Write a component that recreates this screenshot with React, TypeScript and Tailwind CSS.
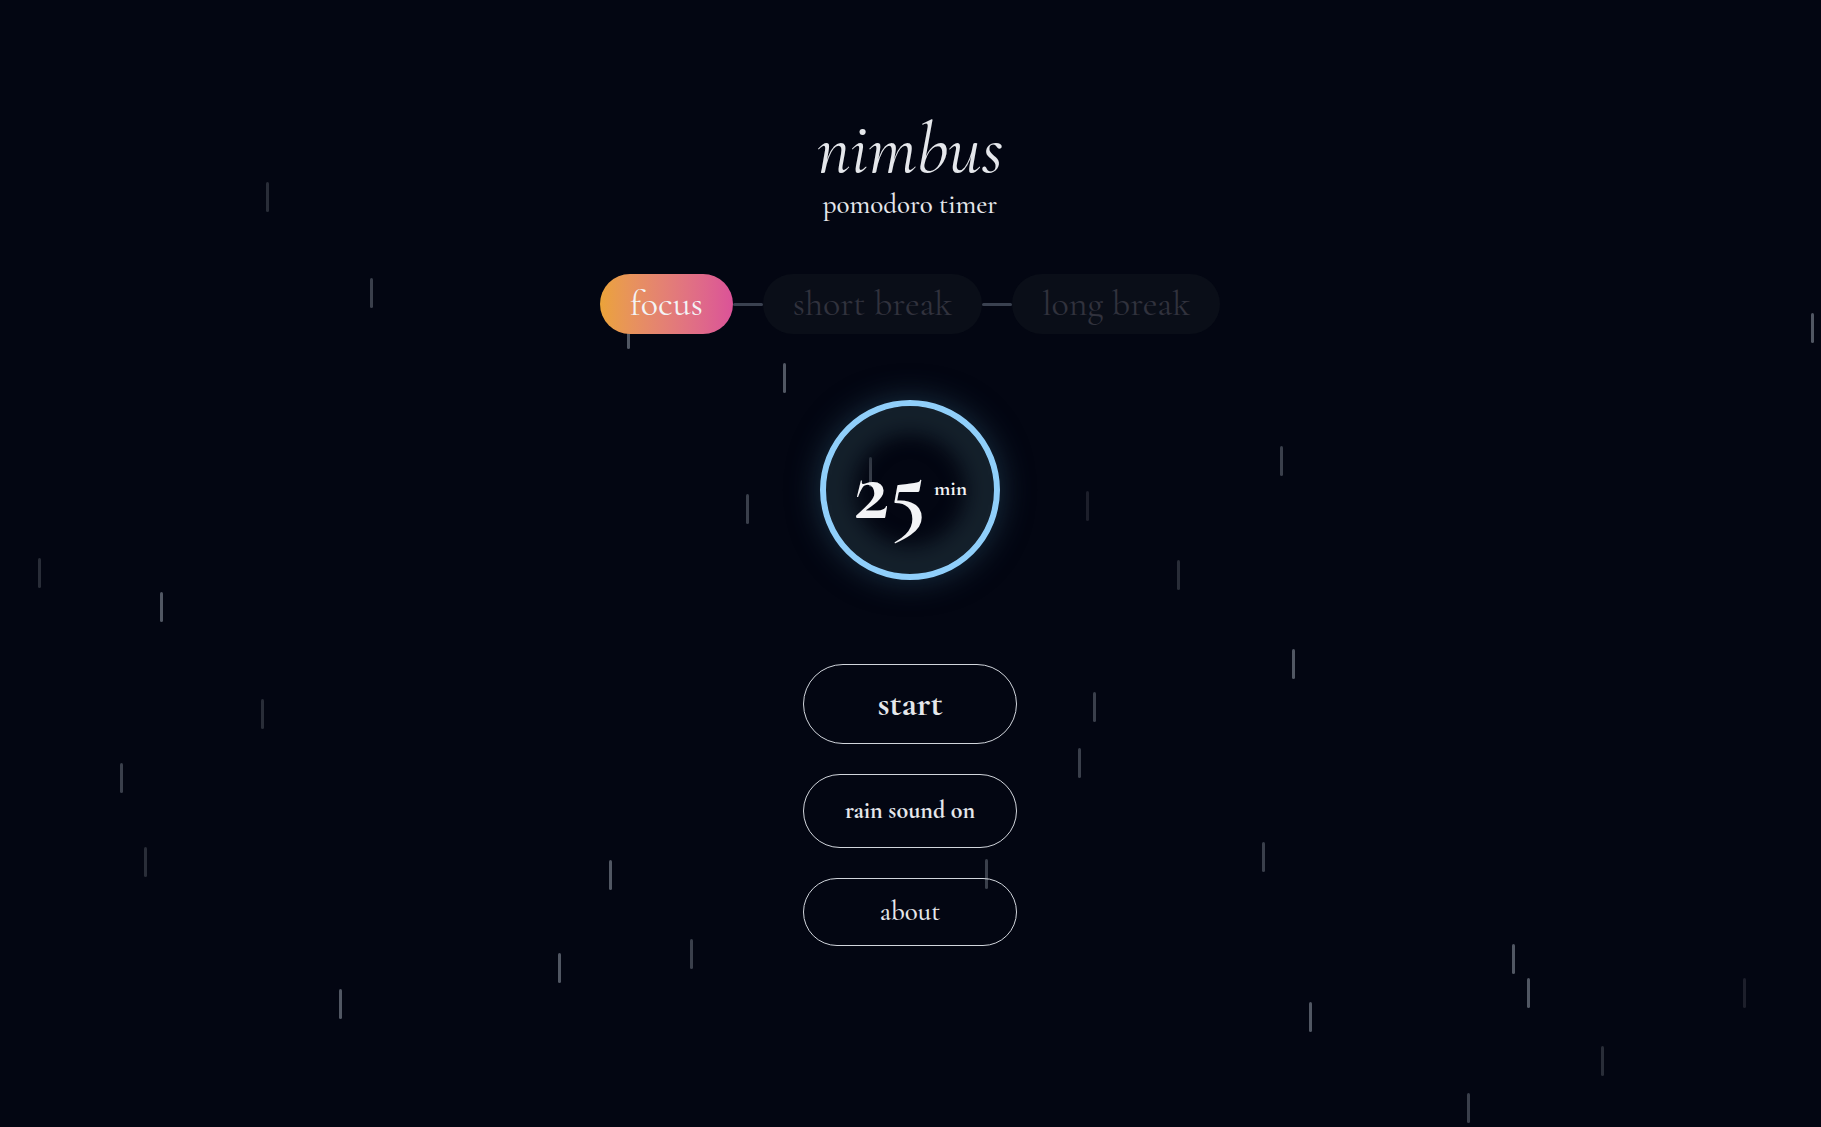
import { Fragment } from "react";

type Drop = { x: number; y: number; tone: string };

const faint = "bg-[#1d1f2b]";
const dim = "bg-[#292d38]";
const mid = "bg-[#3a3f4b]";
const bright = "bg-[#515763]";

const drops: Drop[] = [
  { x: 266, y: 182, tone: dim },
  { x: 370, y: 278, tone: mid },
  { x: 627, y: 319, tone: bright },
  { x: 783, y: 363, tone: bright },
  { x: 1811, y: 313, tone: bright },
  { x: 1280, y: 446, tone: mid },
  { x: 869, y: 457, tone: mid },
  { x: 1086, y: 491, tone: faint },
  { x: 746, y: 494, tone: mid },
  { x: 38, y: 558, tone: dim },
  { x: 1177, y: 560, tone: dim },
  { x: 160, y: 592, tone: bright },
  { x: 1292, y: 649, tone: bright },
  { x: 1093, y: 692, tone: mid },
  { x: 261, y: 699, tone: dim },
  { x: 1078, y: 748, tone: mid },
  { x: 120, y: 763, tone: mid },
  { x: 1262, y: 842, tone: mid },
  { x: 144, y: 847, tone: dim },
  { x: 985, y: 859, tone: mid },
  { x: 609, y: 860, tone: bright },
  { x: 690, y: 939, tone: mid },
  { x: 1512, y: 944, tone: bright },
  { x: 558, y: 953, tone: bright },
  { x: 1527, y: 978, tone: bright },
  { x: 1743, y: 978, tone: faint },
  { x: 339, y: 989, tone: bright },
  { x: 1309, y: 1002, tone: bright },
  { x: 1601, y: 1046, tone: dim },
  { x: 1467, y: 1093, tone: mid },
];

const modes = ["focus", "short break", "long break"];

function Rain() {
  return (
    <div aria-hidden="true" className="pointer-events-none absolute inset-0 overflow-hidden">
      {drops.map((d) => (
        <span
          key={`${d.x}-${d.y}`}
          className={`absolute h-[30px] w-[3px] rounded-full ${d.tone}`}
          style={{ left: d.x, top: d.y }}
        />
      ))}
    </div>
  );
}

export default function App() {
  const pill =
    "flex w-full items-center justify-center rounded-full border border-gray-300 text-gray-200";
  return (
    <main className="relative flex min-h-screen flex-col items-center overflow-hidden bg-[#030612] pt-[113px] pr-px font-['Cormorant_Garamond','Liberation_Serif',serif] text-gray-200 antialiased">
      <Rain />
      <header className="relative flex flex-col items-center">
        <h1 className="text-[72px] leading-[72px] font-normal italic">nimbus</h1>
        <p className="mt-1 text-[27px] leading-8 font-medium">pomodoro timer</p>
      </header>

      <nav aria-label="Timer mode" className="relative mt-[53px] flex items-center">
        {modes.map((mode, i) => (
          <Fragment key={mode}>
            {i > 0 && <span className="h-[3px] w-[30px] rounded-full bg-[#3a4150]" />}
            <button
              type="button"
              className={
                i === 0
                  ? "h-[60px] rounded-full bg-linear-to-r from-[#eba338] to-[#db5298] px-[30px] text-[36px] text-gray-100"
                  : "h-[60px] rounded-full bg-[#0a0e18] px-[30px] text-[36px] text-[#31323d]"
              }
            >
              {mode}
            </button>
          </Fragment>
        ))}
      </nav>

      <section
        aria-label="Time remaining"
        className="relative mt-[66px] flex size-[180px] items-center justify-center rounded-full border-6 border-[#90cffa] shadow-[0_0_30px_2px_#182d3e,inset_0_0_20px_28px_#14202b]"
      >
        <p className="flex items-start gap-2 font-bold text-gray-100">
          <span className="text-[90px] leading-[90px]">25</span>
          <span className="pt-8 text-[21px] leading-6">min</span>
        </p>
      </section>

      <div className="relative mt-[84px] flex w-[214px] flex-col gap-[30px]">
        <button type="button" className={`${pill} h-20 text-[36px] font-bold`}>
          start
        </button>
        <button type="button" className={`${pill} h-[74px] text-[24px] font-bold`}>
          rain sound on
        </button>
        <button type="button" className={`${pill} h-[68px] text-[27px] font-medium`}>
          about
        </button>
      </div>
    </main>
  );
}
